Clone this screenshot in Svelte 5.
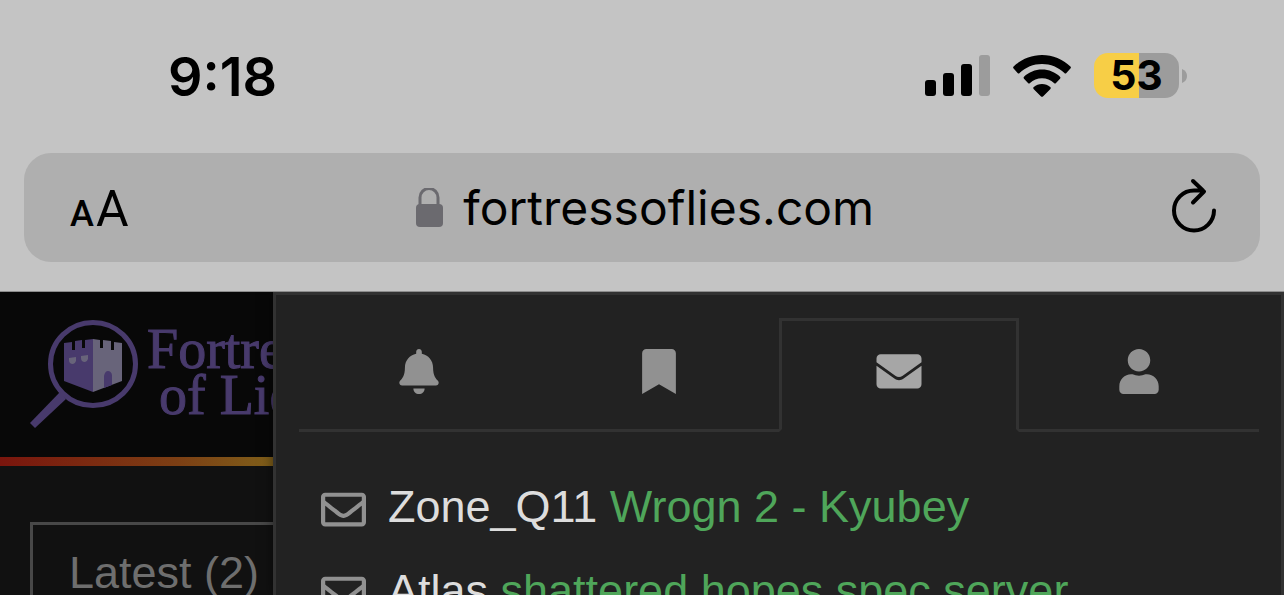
<script>
  const tabs = [
    { id: 'notifications', label: 'Notifications', box: '0 0 448 512', width: 40, path: 'M224 512c35.32 0 63.97-28.65 63.97-64H160.03c0 35.35 28.65 64 63.97 64zm215.39-149.71c-19.32-20.76-55.47-51.99-55.47-154.29 0-77.7-54.48-139.9-127.94-155.16V32c0-17.67-14.32-32-31.98-32s-31.98 14.33-31.98 32v20.84C118.56 68.1 64.08 130.3 64.08 208c0 102.3-36.15 133.53-55.47 154.29-6 6.45-8.66 14.16-8.61 21.71.11 16.4 12.98 32 32.1 32h383.8c19.12 0 32-15.6 32.1-32 .05-7.55-2.61-15.27-8.61-21.71z' },
    { id: 'bookmarks', label: 'Bookmarks', box: '0 0 384 512', width: 34, path: 'M0 512V48C0 21.49 21.49 0 48 0h288c26.51 0 48 21.49 48 48v464L192 400 0 512z' },
    { id: 'messages', label: 'Messages', box: '0 0 512 512', width: 46, path: 'M0 190L203 336c33 25 73 25 106 0L512 190V400c0 26.500-21.500 48-48 48H48c-26.500 0-48-21.500-48-48zM48 60H464c26.500 0 48 21.500 48 48v42L298 305c-27 19-57 19-84 0L0 150v-42c0-26.500 21.500-48 48-48z' },
    { id: 'profile', label: 'Profile', box: '0 0 448 512', width: 40, path: 'M224 256c70.7 0 128-57.3 128-128S294.7 0 224 0 96 57.3 96 128s57.3 128 128 128zm89.6 32h-16.7c-22.2 10.2-46.9 16-72.9 16s-50.6-5.8-72.9-16h-16.7C60.2 288 0 348.2 0 422.4V464c0 26.5 21.5 48 48 48h352c26.5 0 48-21.5 48-48v-41.6c0-74.2-60.2-134.4-134.4-134.4z' }
  ];
  const messages = [
    { from: 'Zone_Q11', title: 'Wrogn 2 - Kyubey' },
    { from: 'Atlas', title: 'shattered hopes spec server' }
  ];
  let active = $state('messages');
</script>

<div class="screen">
  <header class="chrome">
    <div class="status">
      <time>9:18</time>
      <div class="indicators">
        <svg width="65" height="42" viewBox="0 0 65 42" aria-hidden="true">
          <rect y="25" width="11" height="16" rx="3" />
          <rect x="18" y="18" width="11" height="23" rx="3" />
          <rect x="36" y="9" width="11" height="32" rx="3" />
          <rect x="54" width="11" height="41" rx="3" fill="#9c9c9c" />
        </svg>
        <svg width="58" height="42" viewBox="0 0 58 42" aria-hidden="true">
          <path d="M29 0C18.200 0 8 4.300.6 11.600q-1 1 0 2l4 4.400q1 1 2 0C12.500 12.300 20.500 9 29 9s16.500 3.300 22.400 9q1 1 2 0l4-4.400q1-1 0-2C50 4.300 39.800 0 29 0z" />
          <path d="M29 14.600c-6.900 0-13.200 2.700-18 7.200q-1 1 0 2l4 4.200q1 1 2 0c3.200-2.900 7.400-4.700 12-4.700s8.800 1.800 12 4.700q1 1 2 0l4-4.200q1-1 0-2c-4.800-4.500-11.100-7.200-18-7.200z" />
          <path d="M29 29c-3.200 0-6 1.100-8.200 3q-1.200 1 0 2.200l7 7q1.200 1.200 2.400 0l7-7q1.200-1.200 0-2.200C35 30.100 32.200 29 29 29z" />
        </svg>
        <div class="power">
          <span class="battery">53</span>
          <svg width="5" height="14" viewBox="0 0 5 14" aria-hidden="true"><path d="M0 0q5 2 5 7t-5 7z" fill="#9c9c9c" /></svg>
        </div>
      </div>
    </div>

    <div class="address">
      <button class="reader" aria-label="Page settings"><small>A</small><span>A</span></button>
      <a class="url" href="https://fortressoflies.com">
        <svg width="28" height="40" viewBox="0 0 28 40" aria-hidden="true">
          <path d="M5 17v-7.500a9 9 0 0 1 18 0V17" fill="none" stroke="#6b6a6f" stroke-width="3" />
          <rect x="1" y="16" width="27" height="23" rx="4" fill="#6b6a6f" />
        </svg>
        <span>fortressoflies.com</span>
      </a>
      <button class="reload" aria-label="Reload">
        <svg width="46" height="60" viewBox="0 0 46 60" aria-hidden="true">
          <path d="M43 32.500a20 20 0 1 1-20-20h9M22 3l11 10.500L22 24.500" fill="none" stroke="#000" stroke-width="4" stroke-linecap="round" stroke-linejoin="round" />
        </svg>
      </button>
    </div>
  </header>

  <div class="body">
    <main class="site">
      <div class="banner">
        <svg class="emblem" width="110" height="112" viewBox="0 0 110 112" aria-hidden="true">
          <ellipse cx="63" cy="44" rx="42.500" ry="41.500" fill="none" stroke="#483a6c" stroke-width="5" />
          <path d="M30 72l6 7-31 29-5-5z" fill="#483a6c" />
          <path d="M34 23l8-1v8h3v-9l7-1v8h3v-8l8-1v53l-29-11z" fill="#483a6c" />
          <path d="M63 19l7 1v8h3v-8l8 1v9h3v-8l8 1v38L63 72z" fill="#68647a" />
          <path d="M39 38l7-1v4q-1 3-3 3-4 0-4-4zM51 36l7-1v4q-1 3-3 3-4 0-4-4z" fill="#68647a" />
          <path d="M74 68V56q1-5 4-5t4 4v10z" fill="#483a6c" />
        </svg>
        <div class="wordmark"><span>Fortress</span><span class="second">of Lies</span></div>
      </div>
      <div class="content">
        <a class="latest" href="#latest">Latest (2)</a>
      </div>
    </main>

    <section class="panel" aria-label="User menu">
      <nav class="tabs">
        {#each tabs as tab (tab.id)}
          <button class:active={active === tab.id} aria-label={tab.label} onclick={() => (active = tab.id)}>
            <svg width={tab.width} height="45" viewBox={tab.box} aria-hidden="true"><path d={tab.path} /></svg>
          </button>
        {/each}
      </nav>
      <ul>
        {#each messages as message}
          <li>
            <svg width="45" height="45" viewBox="0 0 512 512" aria-hidden="true">
              <path d="M464 64H48C21.490 64 0 85.490 0 112v288c0 26.510 21.490 48 48 48h416c26.510 0 48-21.490 48-48V112c0-26.510-21.490-48-48-48zm0 48v40.805c-22.422 18.259-58.168 46.651-134.587 106.490-16.841 13.247-50.201 45.072-73.413 44.701-23.208.375-56.579-31.459-73.413-44.701C106.180 199.465 70.425 171.067 48 152.805V112h416zM48 400V214.398c22.914 18.251 55.409 43.862 104.938 82.646 21.857 17.205 60.134 55.186 103.062 54.955 42.717.231 80.509-37.199 103.053-54.947 49.528-38.783 82.032-64.401 104.947-82.653V400H48z" />
            </svg>
            <a href="#message"><span class="from">{message.from}</span> {message.title}</a>
          </li>
        {/each}
      </ul>
    </section>
  </div>
</div>

<style>
  :global(body) {
    margin: 0;
    background: #111;
  }
  .screen {
    height: 100vh;
    display: flex;
    flex-direction: column;
    overflow: hidden;
    font-family: 'Liberation Sans', Arial, sans-serif;
  }
  svg {
    display: block;
    flex: none;
  }
  button {
    margin: 0;
    padding: 0;
    border: 0;
    background: none;
    color: inherit;
    font: inherit;
  }
  a {
    color: inherit;
    text-decoration: none;
  }
  .chrome {
    flex: none;
    background: #c4c4c4;
    color: #000;
    border-bottom: 1px solid #8c8c8c;
    padding: 0 24px 29px;
    font-family: Inter, sans-serif;
  }
  .status {
    display: flex;
    justify-content: space-between;
    align-items: center;
    height: 151px;
    padding: 0 73px 2px 144px;
  }
  time {
    padding-top: 2px;
    font-size: 54px;
    font-weight: 600;
    line-height: 60px;
  }
  .indicators,
  .power {
    display: flex;
    align-items: center;
  }
  .indicators {
    gap: 23px;
  }
  .power {
    gap: 3px;
  }
  .battery {
    width: 85px;
    border-radius: 14px;
    background: linear-gradient(90deg, #f7ce46 53%, #9c9c9c 53%);
    font-size: 41px;
    font-weight: 700;
    line-height: 45px;
    text-align: center;
  }
  .address {
    display: flex;
    align-items: center;
    justify-content: space-between;
    height: 109px;
    padding: 0 43px 0 46px;
    border-radius: 27px;
    background: #afafaf;
  }
  .reader {
    display: flex;
    align-items: baseline;
    padding-top: 8px;
    gap: 2px;
    font-family: Roboto, sans-serif;
    font-size: 50px;
    line-height: 60px;
  }
  .reader small {
    font-size: 36px;
    font-weight: 500;
  }
  .url {
    display: flex;
    align-items: center;
    gap: 20px;
    margin-right: 10px;
    font-size: 48px;
    line-height: 60px;
  }
  .body {
    flex: 1;
    min-height: 0;
    display: flex;
    overflow: hidden;
  }
  .site {
    flex: 0 0 273px;
    overflow: hidden;
    background: #111;
  }
  .banner {
    display: flex;
    gap: 7px;
    height: 137px;
    padding: 28px 0 0 30px;
    background: #080808;
    border-bottom: 9px solid;
    border-image: linear-gradient(90deg, #7a150d, #7c3f14 65%, #80601a) 1;
  }
  .wordmark {
    display: flex;
    flex-direction: column;
    padding-top: 6px;
    color: #483a6c;
    font-family: 'Liberation Serif', serif;
    font-size: 56px;
    -webkit-text-stroke: 1px #483a6c;
    line-height: 46px;
    white-space: nowrap;
  }
  .second {
    padding-left: 12px;
  }
  .content {
    padding: 56px 0 0 30px;
  }
  .latest {
    display: block;
    width: 420px;
    padding: 21px 36px;
    border: 3px solid #484848;
    color: #6e6e6e;
    font-size: 45px;
    line-height: 54px;
  }
  .panel {
    flex: 1;
    min-width: 0;
    border: 3px solid #323232;
    border-bottom: 0;
    padding: 23px 22px 0 23px;
    background: #222;
    overflow: hidden;
    box-shadow: 0 0 12px #0008;
  }
  .tabs {
    display: grid;
    grid-template-columns: repeat(4, 1fr);
  }
  .tabs button {
    display: flex;
    justify-content: center;
    align-items: center;
    height: 114px;
    padding-bottom: 4px;
    border-bottom: 3px solid #323232;
    box-sizing: border-box;
    fill: #919191;
  }
  .tabs button.active {
    border: 3px solid #323232;
    border-bottom-color: transparent;
    padding-bottom: 7px;
    fill: #a6a6a6;
  }
  ul {
    list-style: none;
    margin: 0;
    padding: 33px 22px 0;
  }
  li {
    display: flex;
    align-items: center;
    gap: 22px;
    height: 84px;
    color: #4fa65a;
    font-size: 45px;
    line-height: 54px;
    white-space: nowrap;
    fill: #919191;
  }
  li svg {
    margin-top: 4px;
  }
  .from {
    color: #ddd;
  }
</style>
